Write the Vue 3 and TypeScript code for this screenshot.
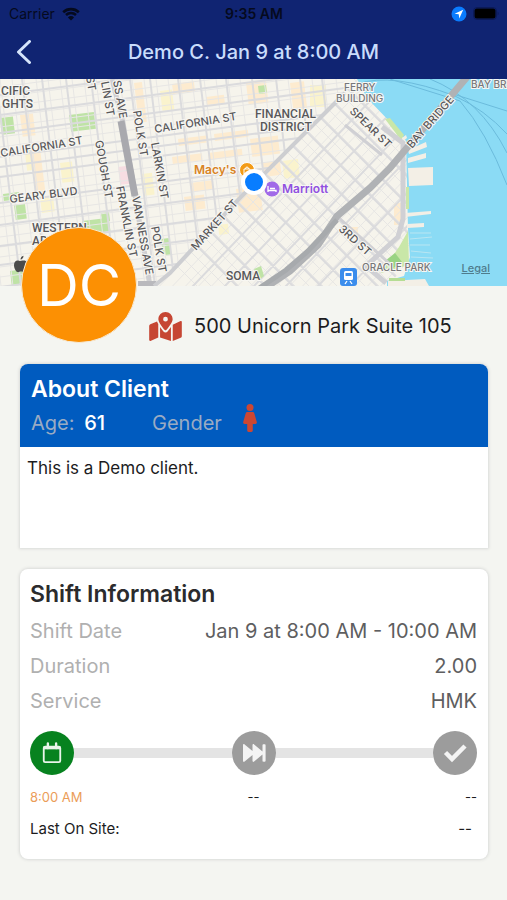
<script setup lang="ts">
interface Label {
  text: string
  x: number
  y: number
  angle?: number
  kind?: 'area' | 'light'
}

interface Patch {
  x: number
  y: number
  w: number
  h: number
  kind: 'park' | 'shop' | 'pale' | 'health'
}

interface Row {
  name: string
  value: string
}

const crossStreets = (starts: number[]) =>
  starts.map((y) => `M0 ${y}L345 ${y - 45}`).join('')
const hillStreets = (starts: number[]) =>
  starts.map((x) => `M${x} 0L${x + 25} 207`).join('')
const range = (from: number, to: number, step: number): number[] =>
  Array.from({ length: Math.ceil((to - from) / step) }, (_, i) => from + i * step)

const westMinor = crossStreets(range(8, 260, 10)) + hillStreets(range(-24, 345, 12))
const westMajor =
  crossStreets([16, 36, 54, 78, 88, 98, 124, 146, 167, 186, 208, 232]) +
  hillStreets([-4, 22, 42, 66, 91, 130, 150, 178, 200, 226, 252, 276, 300, 322])

const eastMinor =
  range(-180, 280, 14).map((d) => `M${170 + d} 0l230 230`).join('') +
  range(150, 620, 13).map((s) => `M${s} 0l-230 240`).join('')
const eastMajor =
  range(-140, 280, 28).map((d) => `M${170 + d} 0l230 230`).join('') +
  [391, 423, 452, 484, 516, 548].map((s) => `M${s} 0l-220 230`).join('')

const patches: Patch[] = [
  { x: 20, y: 36, w: 13, h: 22, kind: 'shop' },
  { x: 24, y: 66, w: 10, h: 26, kind: 'pale' },
  { x: 31, y: 70, w: 9, h: 45, kind: 'shop' },
  { x: 60, y: 84, w: 12, h: 20, kind: 'pale' },
  { x: 40, y: 118, w: 13, h: 16, kind: 'pale' },
  { x: 118, y: 88, w: 10, h: 18, kind: 'health' },
  { x: 134, y: 4, w: 8, h: 40, kind: 'shop' },
  { x: 160, y: 12, w: 12, h: 20, kind: 'pale' },
  { x: 142, y: 95, w: 10, h: 22, kind: 'pale' },
  { x: 172, y: 5, w: 22, h: 10, kind: 'shop' },
  { x: 206, y: 18, w: 18, h: 8, kind: 'shop' },
  { x: 246, y: 4, w: 20, h: 22, kind: 'shop' },
  { x: 290, y: 4, w: 14, h: 30, kind: 'shop' },
  { x: 310, y: 6, w: 16, h: 22, kind: 'pale' },
  { x: 178, y: 60, w: 28, h: 7, kind: 'shop' },
  { x: 214, y: 55, w: 34, h: 7, kind: 'shop' },
  { x: 172, y: 78, w: 30, h: 7, kind: 'shop' },
  { x: 208, y: 74, w: 34, h: 7, kind: 'shop' },
  { x: 250, y: 60, w: 28, h: 18, kind: 'shop' },
  { x: 190, y: 104, w: 22, h: 9, kind: 'shop' },
  { x: 262, y: 84, w: 18, h: 14, kind: 'shop' },
  { x: 184, y: 118, w: 20, h: 14, kind: 'shop' },
  { x: 236, y: 110, w: 24, h: 24, kind: 'shop' },
  { x: 282, y: 82, w: 16, h: 18, kind: 'pale' },
  { x: 394, y: 124, w: 8, h: 22, kind: 'shop' },
  { x: 348, y: 148, w: 10, h: 8, kind: 'shop' },
  { x: 218, y: 146, w: 10, h: 10, kind: 'pale' },
  { x: 0, y: 39, w: 13, h: 17, kind: 'park' },
  { x: 69, y: 36, w: 25, h: 17, kind: 'park' },
  { x: 3, y: 115, w: 16, h: 7, kind: 'park' },
  { x: 14, y: 126, w: 11, h: 15, kind: 'park' },
  { x: 82, y: 142, w: 27, h: 15, kind: 'park' },
  { x: 101, y: 134, w: 8, h: 9, kind: 'park' },
  { x: 10, y: 192, w: 20, h: 15, kind: 'park' },
  { x: 161, y: 160, w: 8, h: 17, kind: 'park' },
  { x: 258, y: 7, w: 8, h: 8, kind: 'park' },
]

const labels: Label[] = [
  { text: 'CIFIC', x: 1, y: 16, kind: 'area' },
  { text: 'GHTS', x: 2, y: 29, kind: 'area' },
  { text: 'CALIFORNIA ST', x: 1, y: 78, angle: -9 },
  { text: 'GEARY BLVD', x: 10, y: 124, angle: -7 },
  { text: 'WESTERN', x: 32, y: 153, kind: 'area' },
  { text: 'ADDITION', x: 32, y: 166, kind: 'area' },
  { text: 'ST', x: 86, y: -2, angle: 80 },
  { text: 'LIN ST', x: 101, y: 3, angle: 80 },
  { text: 'SS AVE', x: 113, y: 2, angle: 80 },
  { text: 'POLK ST', x: 133, y: 32, angle: 81 },
  { text: 'GOUGH ST', x: 95, y: 62, angle: 80 },
  { text: 'LARKIN ST', x: 151, y: 64, angle: 80 },
  { text: 'FRANKLIN ST', x: 116, y: 108, angle: 79 },
  { text: 'VAN NESS AVE', x: 132, y: 118, angle: 80 },
  { text: 'POLK ST', x: 151, y: 148, angle: 80 },
  { text: 'CALIFORNIA ST', x: 155, y: 54, angle: -9 },
  { text: 'FINANCIAL', x: 255, y: 39, kind: 'area' },
  { text: 'DISTRICT', x: 260, y: 52, kind: 'area' },
  { text: 'MARKET ST', x: 196, y: 172, angle: -48 },
  { text: 'SOMA', x: 226, y: 201, kind: 'area' },
  { text: 'FERRY', x: 344, y: 12, kind: 'light' },
  { text: 'BUILDING', x: 336, y: 23, kind: 'light' },
  { text: 'SPEAR ST', x: 349, y: 33, angle: 44 },
  { text: 'BAY BRIDGE', x: 412, y: 70, angle: -49 },
  { text: 'BAY BRIDGE', x: 471, y: 9, kind: 'light' },
  { text: '3RD ST', x: 338, y: 151, angle: 42 },
  { text: 'ORACLE PARK', x: 362, y: 192, kind: 'light' },
]

const rows: Row[] = [
  { name: 'Shift Date', value: 'Jan 9 at 8:00 AM - 10:00 AM' },
  { name: 'Duration', value: '2.00' },
  { name: 'Service', value: 'HMK' },
]
</script>

<template>
  <div class="screen">
    <header class="top">
      <div class="status">
        <span class="carrier">
          Carrier
          <svg class="wifi" viewBox="0 0 18 14" aria-hidden="true">
            <path d="M1.2 5.2a11.4 11.4 0 0 1 15.6 0" />
            <path d="M4 8a7.3 7.3 0 0 1 10 0" />
            <path class="solid" d="M9 13.6 5.9 10.4a4.4 4.4 0 0 1 6.2 0z" />
          </svg>
        </span>
        <span class="clock">9:35 AM</span>
        <span class="indicators">
          <svg class="location" viewBox="0 0 16 16" aria-hidden="true">
            <circle cx="8" cy="8" r="7.5" fill="#0a7cff" />
            <path d="M12.2 3.8 3.6 7.7l4.1.6.6 4.1z" fill="#fff" />
          </svg>
          <svg class="battery" viewBox="0 0 26 14" aria-hidden="true">
            <rect x=".5" y=".5" width="23" height="12" rx="3.5" fill="none" stroke="#0b1a58" />
            <rect x="1.5" y="1.5" width="21" height="10" rx="2.5" />
            <path d="M24.6 4.5v4c1.3-.6 1.3-3.4 0-4z" fill="#0b1a58" />
          </svg>
        </span>
      </div>
      <div class="nav">
        <button class="back" type="button" aria-label="Back">
          <svg viewBox="0 0 16 24" aria-hidden="true"><path d="M13.5 1.5 2.5 12l11 10.5" /></svg>
        </button>
        <h1>Demo C. Jan 9 at 8:00 AM</h1>
      </div>
    </header>

    <section class="map">
      <svg class="map-art" viewBox="0 0 507 207" preserveAspectRatio="xMidYMid slice">
        <defs>
          <clipPath id="west"><path d="M0 0H345V14L303 56 237 122 158 207H0z" /></clipPath>
          <clipPath id="east">
            <path d="M158 207 237 122 303 56 345 14V0h12l10 19 26 27 15 20v84l2 30-22 27z" />
          </clipPath>
        </defs>
        <rect width="507" height="207" fill="#f6f4ec" />
        <rect
          v-for="(p, i) in patches"
          :key="i"
          :x="p.x"
          :y="p.y"
          :width="p.w"
          :height="p.h"
          :class="p.kind"
          :transform="p.x < 300 ? `rotate(-7 ${p.x} ${p.y})` : undefined"
        />
        <g clip-path="url(#west)">
          <path class="minor" :d="westMinor" />
          <path class="major" :d="westMajor" />
          <path d="M112 0 123 44 135 116 150 207" stroke="#cfcfd2" stroke-width="5" fill="none" />
          <path d="M121 42 135 117" stroke="#a9a9ae" stroke-width="7" fill="none" />
          <path d="M138 205h18" stroke="#b9b9bd" stroke-width="6" />
        </g>
        <g clip-path="url(#east)">
          <path class="minor" :d="eastMinor" />
          <path class="major" :d="eastMajor" />
        </g>
        <path class="market" d="M154 207 170 194 237 122 303 56 345 14" />
        <path
          d="M357 0 367 19 393 46 406 62 408 150 410 178 404 197 387 202V207H507V0z"
          fill="#8bdbf5"
        />
        <path
          d="M408 71 426 63l1 5-18 7zM408 79l18-5v5l-18 5zM408 89l25-1v18l-24 1zM405 134l26-2v3l-26 3zM407 145l17-1v4l-17 1zM399 61l7-5 1 3-6 5zM388 202l37-2 4 7h-41z"
          fill="#f3efe6"
        />
        <path
          d="M385 40l5-1 14 17-3 5zM406 108h3v22h-3zM408 152l-9 16-18 26 28-8z"
          fill="#c9e7a8"
        />
        <path d="m395 174 7 9-10 7-7-8z" fill="#9ad383" />
        <path d="M389 199h16v3h-16z" fill="#b5dd94" />
        <path class="ripples" d="M410 154h21M410 160l22-2M410 166h20M411 172l20 2M411 178l22 1" />
        <path
          class="ferry"
          d="M357 5q35-12 98 12q30 14 52 38M390 0l70 22q26 30 47 84M450 14l57 18M430 0q50 20 77 74"
        />
        <path
          d="M382 48 403 64V140L398 158 366 187 386 204"
          fill="none"
          stroke="#d0d0d4"
          stroke-width="5"
        />
        <path d="M345 46 382 76M338 138 390 185" fill="none" stroke="#d0d0d4" stroke-width="3" />
        <path d="M262 211 290 192 318 166 337 137 370 109 390 89 467-2" class="freeway" />
        <path d="M258 210 286 191 308 172 337 141" fill="none" stroke="#a7aaad" stroke-width="5" />
        <path d="m254 190 7-3 3 10-5 4z" class="park" />
        <text
          v-for="(l, i) in labels"
          :key="`l${i}`"
          :x="l.x"
          :y="l.y"
          :class="['label', l.kind]"
          :transform="l.angle ? `rotate(${l.angle} ${l.x} ${l.y})` : undefined"
        >{{ l.text }}</text>
        <path
          d="M23.500 181.500c-1.500-.5-3 .8-4.500.3-3-.9-5 1.500-5 4.400 0 3.600 2.400 7 4.200 7 1 0 1.500-.7 2.800-.7s1.800.7 2.900.7c1.500 0 2.900-2 3.500-4-2.600-1.200-2.800-4.700-.3-6-1-1.400-2.300-1.800-3.600-1.700zM20.500 180.500c0-2 1.300-3.500 3-3.800.1 2-1.300 3.600-3 3.800z"
          fill="#4b4b4b"
        />
        <circle cx="247" cy="91" r="7.500" fill="#f39b16" stroke="#fff" />
        <path d="M244 90h6v5h-6zM245.500 90a1.500 2 0 0 1 3 0" fill="none" stroke="#fff" />
        <text x="194" y="95" class="poi" fill="#d98324">Macy's</text>
        <circle cx="272" cy="110" r="7.500" fill="#a16ae8" />
        <path
          d="M268 107v6M268 111.500h8v1.500M270 109.500h5"
          stroke="#fff"
          stroke-width="1.300"
          fill="none"
        />
        <text x="282" y="114" class="poi" fill="#9050e0">Marriott</text>
        <circle cx="254" cy="103" r="13" fill="#fff" />
        <circle cx="254" cy="103" r="9" fill="#087dff" />
        <g>
          <rect x="340" y="189" width="17" height="18" rx="3" fill="#3b8dec" />
          <rect x="344" y="192" width="9" height="9" rx="1.500" fill="#fff" />
          <path d="M345.500 194h6v3h-6z" fill="#3b8dec" />
          <path d="m345 205 2-3M352 205l-2-3" stroke="#fff" stroke-width="1.300" />
        </g>
      </svg>
      <a class="legal" href="#legal">Legal</a>
    </section>

    <main>
      <section class="profile">
        <div class="avatar">DC</div>
        <div class="address">
          <svg class="map-icon" viewBox="0 0 576 512" aria-hidden="true">
            <path
              d="M288 0c-70 0-126 56-126 126 0 56 82 156 113 192 7 8 19 8 26 0 31-36 113-136 113-192C414 56 358 0 288 0zm0 168a42 42 0 1 1 0-84 42 42 0 0 1 0 84zM20 216A32 32 0 0 0 0 246v250c0 11 11 19 22 15l138-63V214c-9-16-16-32-21-47L20 216zm268 144c-14 0-27-6-37-17-19-23-40-49-59-76v181l192 64V267c-19 27-40 53-59 76-10 11-23 17-37 17zm266-199-138 63v288l140-56a32 32 0 0 0 20-30V176c0-11-11-19-22-15z"
            />
          </svg>
          <span>500 Unicorn Park Suite 105</span>
        </div>
      </section>

      <section class="card about">
        <header>
          <h2>About Client</h2>
          <div class="facts">
            <span class="age">Age: <b>61</b></span>
            <span>Gender</span>
            <svg class="female" viewBox="0 0 14 29" role="img" aria-label="Female">
              <circle cx="7" cy="3.500" r="3.500" />
              <path d="M4.300 8h5.400c.8 0 1.300.4 1.500 1.100l2.600 9c.3 1-.3 1.900-1.400 1.900H9.800v6.600c0 .9-.6 1.400-1.300 1.400h-3c-.7 0-1.300-.5-1.300-1.400V20H1.600C.5 20-.1 19.100.2 18.100l2.600-9C3 8.400 3.500 8 4.300 8z" />
            </svg>
          </div>
        </header>
        <p>This is a Demo client.</p>
      </section>

      <section class="card shift">
        <h2>Shift Information</h2>
        <dl>
          <div v-for="row in rows" :key="row.name">
            <dt>{{ row.name }}</dt>
            <dd>{{ row.value }}</dd>
          </div>
        </dl>
        <div class="track">
          <span class="step done">
            <svg viewBox="0 0 22 24" aria-hidden="true">
              <path
                d="M6.500 1.500v5M15.500 1.500v5"
                stroke="#e9f5ea"
                stroke-width="2.600"
                stroke-linecap="round"
              />
              <rect x="2" y="5" width="18" height="17" rx="1.500" fill="none" stroke="#e9f5ea" stroke-width="2" />
              <path d="M2 4.500h18v3.500H2z" fill="#e9f5ea" />
            </svg>
          </span>
          <span class="bar"></span>
          <span class="step">
            <svg viewBox="0 0 24 20" aria-hidden="true">
              <path
                d="M1 2.200v15.600c0 1 .9 1.400 1.600.8L10.500 12v5.800c0 1 .9 1.400 1.600.8L20.500 11.500v6c0 .8.400 1.200 1.100 1.200h1c.6 0 1-.4 1-1.200v-15c0-.8-.4-1.200-1-1.200h-1c-.7 0-1.100.4-1.100 1.200v6L12.100 1.400c-.7-.6-1.600-.2-1.600.8V8L2.600 1.400C1.900.8 1 1.200 1 2.200z"
                fill="#f4f4f4"
              />
            </svg>
          </span>
          <span class="bar"></span>
          <span class="step">
            <svg viewBox="0 0 24 20" aria-hidden="true">
              <path d="m2.500 9.500 6.500 6.500L22 3" fill="none" stroke="#f4f4f4" stroke-width="4.500" />
            </svg>
          </span>
        </div>
        <div class="times">
          <span class="planned">8:00 AM</span>
          <span>--</span>
          <span>--</span>
        </div>
        <div class="last">
          <span>Last On Site:</span>
          <span class="last-value">--</span>
        </div>
      </section>
    </main>
  </div>
</template>

<style>
body {
  margin: 0;
  background: #f4f5f1;
}
</style>

<style scoped>
.screen {
  min-height: 100vh;
  background: #f4f5f1;
  color: #1c1c1e;
  font-family: Inter, "Liberation Sans", sans-serif;
}

h1,
h2,
p,
dl,
dd {
  margin: 0;
}

.top {
  padding-bottom: 2px;
  background: #102472;
}

.status {
  display: grid;
  grid-template-columns: 1fr auto 1fr;
  align-items: center;
  height: 27px;
  padding: 0 8px 0 9px;
  color: #050a1e;
  font-size: 14px;
}

.carrier {
  display: flex;
  align-items: center;
  gap: 7px;
}

.wifi {
  width: 18px;
  height: 14px;
  fill: none;
  stroke: #050a1e;
  stroke-width: 2.6;
}

.wifi .solid {
  fill: #050a1e;
  stroke: none;
}

.clock {
  font-weight: 600;
}

.indicators {
  display: flex;
  justify-content: flex-end;
  align-items: center;
  gap: 6px;
}

.location {
  width: 16px;
  height: 16px;
}

.battery {
  width: 26px;
  height: 14px;
}

.nav {
  display: grid;
  grid-template-columns: 48px 1fr 48px;
  align-items: center;
  height: 50px;
}

.back {
  display: flex;
  align-items: center;
  height: 48px;
  padding: 0 16px;
  border: 0;
  background: none;
}

.back svg {
  width: 16px;
  height: 24px;
  fill: none;
  stroke: #d5e4fb;
  stroke-width: 3;
  stroke-linecap: round;
  stroke-linejoin: round;
}

h1 {
  color: #c9dcfc;
  font-size: 20px;
  font-weight: 500;
  text-align: center;
}

.map {
  position: relative;
}

.map-art {
  display: block;
  width: 100%;
}

.park {
  fill: #bfe3a6;
}

.shop {
  fill: #fdebcf;
}

.pale {
  fill: #faf3cd;
}

.health {
  fill: #f7dde2;
}

.minor {
  fill: none;
  stroke: #e7e6e4;
  stroke-width: 1;
}

.major {
  fill: none;
  stroke: #dbdbdd;
  stroke-width: 2;
}

.market {
  fill: none;
  stroke: #cdced1;
  stroke-width: 4;
}

.freeway {
  fill: none;
  stroke: #b0b2b5;
  stroke-width: 7;
}

.ferry {
  fill: none;
  stroke: #6bbbdc;
  stroke-width: 1;
}

.ripples {
  stroke: #b9e6f2;
}

.label {
  fill: #58585a;
  stroke: #f8f7f3;
  stroke-width: 2;
  paint-order: stroke;
  font-size: 11px;
  font-weight: 500;
}

.area {
  font-family: Roboto, "Liberation Sans", sans-serif;
  font-size: 12px;
}

.light {
  fill: #77777a;
  font-size: 10px;
}

.poi {
  stroke: #f8f7f3;
  stroke-width: 2;
  paint-order: stroke;
  font-size: 12px;
  font-weight: 600;
}

.legal {
  position: absolute;
  right: 17px;
  bottom: 11px;
  color: #4f7c8d;
  font-size: 11px;
  font-weight: 500;
}

main {
  display: flex;
  flex-direction: column;
  gap: 21px;
  padding: 0 19px 40px 20px;
}

.profile {
  position: relative;
  display: flex;
  align-items: flex-end;
  gap: 12px;
  margin-top: -59px;
}

.avatar {
  display: flex;
  flex: none;
  align-items: center;
  justify-content: center;
  width: 114px;
  height: 114px;
  margin-left: 1px;
  border: 1px solid #f7ead5;
  border-radius: 50%;
  background: #fc9003;
  color: #fff;
  font-size: 58px;
  font-weight: 400;
}

.address {
  display: flex;
  align-items: center;
  gap: 12px;
  height: 34px;
  font-size: 20px;
}

.map-icon {
  width: 33px;
  height: 29px;
  fill: #c64633;
}

.card {
  border-radius: 8px;
  background: #fff;
  box-shadow: 0 0 3px 1px #d9dad8;
}

h2 {
  font-size: 23px;
  font-weight: 600;
  line-height: 32px;
}

.about {
  min-height: 184px;
  border-radius: 8px 8px 0 0;
  overflow: hidden;
}

.about header {
  padding: 9px 11px 7px;
  background: #005bbf;
}

.about h2 {
  color: #fff;
}

.facts {
  display: flex;
  align-items: center;
  height: 35px;
  color: #9aabc3;
  font-size: 20px;
}

.age {
  width: 121px;
}

.age b {
  margin-left: 4px;
  color: #fff;
  font-weight: 500;
}

.female {
  width: 14px;
  height: 29px;
  margin: 0 0 8px 21px;
  fill: #cb4733;
}

.about p {
  padding: 10px 7px;
  font-size: 17px;
  line-height: 22px;
}

.shift {
  padding: 9px 11px 20px 10px;
}

.shift h2 {
  color: #2b2b2d;
}

dl {
  padding-top: 4px;
}

dl div {
  display: flex;
  justify-content: space-between;
  font-size: 20px;
  line-height: 35px;
}

dt {
  color: #b0b0b0;
}

dd {
  color: #5e5e60;
}

.track {
  display: flex;
  align-items: center;
  padding-top: 12px;
}

.bar {
  flex: 1;
  height: 10px;
  background: #e4e4e4;
}

.step {
  display: flex;
  align-items: center;
  justify-content: center;
  width: 44px;
  height: 44px;
  border-radius: 50%;
  background: #9c9c9c;
}

.step svg {
  width: 24px;
  height: 22px;
}

.done {
  background: #07821f;
}

.times {
  display: grid;
  grid-template-columns: 1fr auto 1fr;
  padding-top: 12px;
  font-size: 13px;
  line-height: 20px;
}

.times :last-child {
  text-align: right;
}

.planned {
  color: #eb9d58;
}

.last {
  display: flex;
  justify-content: space-between;
  padding-top: 12px;
  font-size: 15px;
  line-height: 20px;
}

.last-value {
  padding-right: 5px;
}
</style>
